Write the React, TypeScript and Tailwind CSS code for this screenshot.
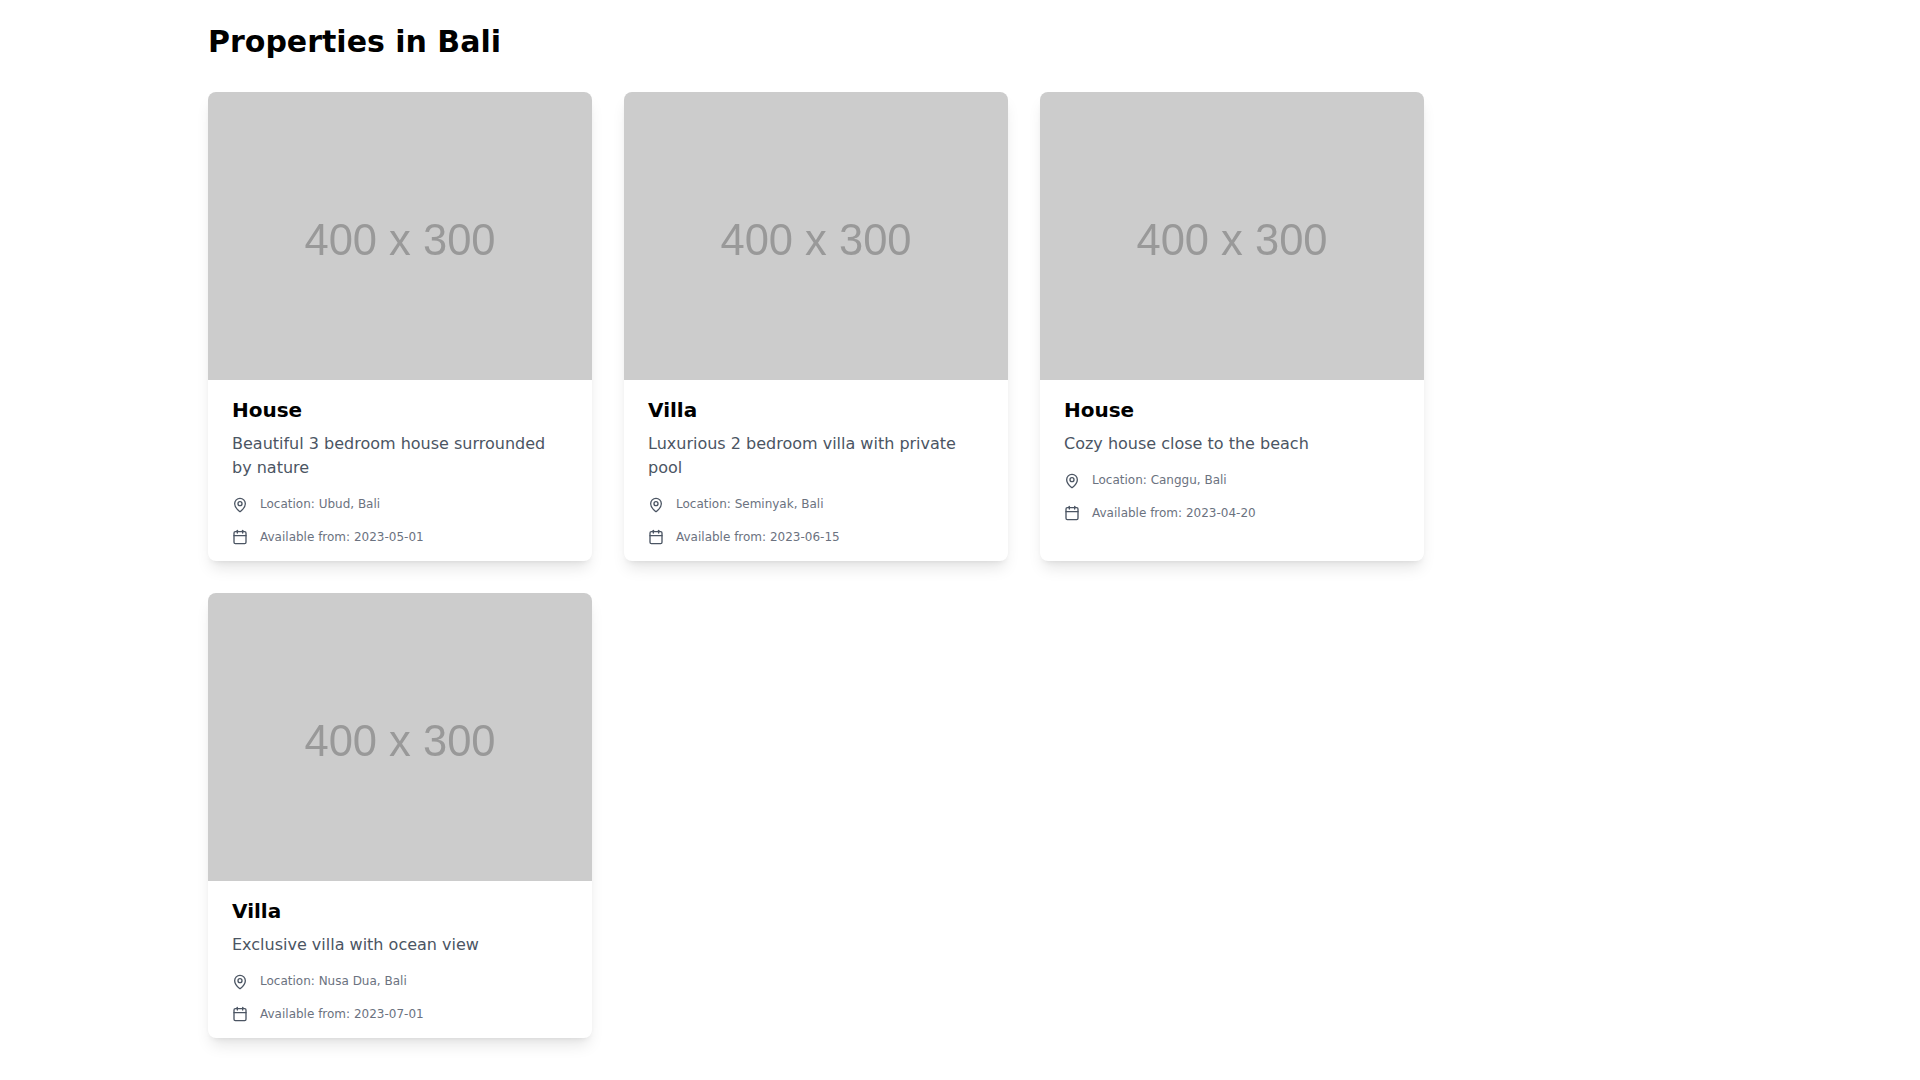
import React from 'react';
import { MapPin, Calendar } from 'lucide-react';

const properties = [
  { type: 'House', description: 'Beautiful 3 bedroom house surrounded by nature', location: 'Ubud, Bali', available: '2023-05-01' },
  { type: 'Villa', description: 'Luxurious 2 bedroom villa with private pool', location: 'Seminyak, Bali', available: '2023-06-15' },
  { type: 'House', description: 'Cozy house close to the beach', location: 'Canggu, Bali', available: '2023-04-20' },
  { type: 'Villa', description: 'Exclusive villa with ocean view', location: 'Nusa Dua, Bali', available: '2023-07-01' },
];

const App: React.FC = () => {
  return (
    <div className="min-h-screen bg-white font-['DejaVu_Sans',sans-serif]">
      <div className="w-[1216px] ml-[208px] pt-6 pb-10">
        <h1 className="text-[30px] leading-9 font-bold text-black mb-8">Properties in Bali</h1>
        <div className="grid grid-cols-3 gap-8">
          {properties.map((p, i) => (
            <div key={i} className="bg-white rounded-lg shadow-lg overflow-hidden">
              <div className="h-[288px] bg-[#cccccc] flex items-center justify-center pt-[10px]">
                <span className="font-['Liberation_Sans',sans-serif] text-[43.5px] text-[#999999] blur-[0.4px]">400 x 300</span>
              </div>
              <div className="px-6 py-4">
                <h2 className="text-xl font-bold text-black mb-2">{p.type}</h2>
                <p className="text-base text-[#4b5563]">{p.description}</p>
                <div className="flex items-start mt-4">
                  <MapPin size={16} className="mr-3 mt-px text-[#4b5563]" />
                  <span className="text-xs text-[#6b7280]">Location: {p.location}</span>
                </div>
                <div className="flex items-center mt-4">
                  <Calendar size={16} className="mr-3 text-[#4b5563]" />
                  <span className="text-xs text-[#6b7280]">Available from: {p.available}</span>
                </div>
              </div>
            </div>
          ))}
        </div>
      </div>
    </div>
  );
};

export default App;
